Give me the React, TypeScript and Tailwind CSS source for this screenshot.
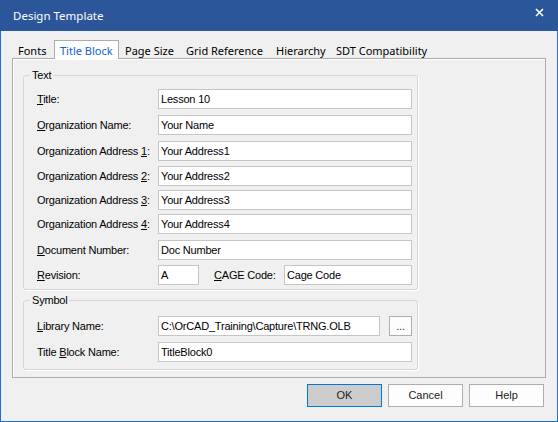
const ui = "font-['Noto_Sans','Open_Sans',sans-serif]";

function Mnemonic({ text, u }: { text: string; u?: number }) {
  if (u === undefined) return <>{text}</>;
  return (
    <>
      {text.slice(0, u)}
      <span className="underline underline-offset-[1px]">{text[u]}</span>
      {text.slice(u + 1)}
    </>
  );
}

function TextBox({ value, className = "" }: { value: string; className?: string }) {
  return (
    <div
      className={`h-[20px] border border-[#c5c5c5] bg-white pl-[2px] flex items-center text-black whitespace-nowrap overflow-hidden ${className}`}
    >
      {value}
    </div>
  );
}

function Row({ label, u, value, className = "" }: { label: string; u?: number; value: string; className?: string }) {
  return (
    <div className={`flex items-center ${className}`}>
      <div className="w-[121px] shrink-0">
        <Mnemonic text={label} u={u} />
      </div>
      <TextBox value={value} className="flex-1" />
    </div>
  );
}

function Group({ title, children, className = "" }: { title: string; children: React.ReactNode; className?: string }) {
  return (
    <fieldset className={`border border-[#d6d6d6] rounded-[3px] shadow-[1px_1px_0_#ffffff] w-[395px] ${className}`}>
      <legend className="ml-[6px] px-[2px] leading-[14px]">{title}</legend>
      {children}
    </fieldset>
  );
}

const textRows = [
  { label: "Title:", u: 0, value: "Lesson 10", mt: "" },
  { label: "Organization Name:", u: 0, value: "Your Name", mt: "mt-[6px]" },
  { label: "Organization Address 1:", u: 21, value: "Your Address1", mt: "mt-[6px]" },
  { label: "Organization Address 2:", u: 21, value: "Your Address2", mt: "mt-[5px]" },
  { label: "Organization Address 3:", u: 21, value: "Your Address3", mt: "mt-[4px]" },
  { label: "Organization Address 4:", u: 21, value: "Your Address4", mt: "mt-[4px]" },
  { label: "Document Number:", u: 0, value: "Doc Number", mt: "mt-[6px]" },
];

const tabs = [
  { name: "Fonts", w: "w-[42px]" },
  { name: "Title Block", w: "w-[65px]", active: true },
  { name: "Page Size", w: "w-[61px]" },
  { name: "Grid Reference", w: "w-[90px]" },
  { name: "Hierarchy", w: "w-[60px]" },
  { name: "SDT Compatibility", w: "w-[110px]" },
];

export default function App() {
  return (
    <div className="w-[558px] h-[422px] flex flex-col bg-[#f0f0f0] font-['Liberation_Sans',Arial,sans-serif] text-[11px] tracking-[-0.2px] text-black">
      {/* title bar */}
      <div className={`h-[31px] shrink-0 bg-[#2b579a] flex items-center justify-between pl-[13px] pr-[14px] text-white text-[11.5px] tracking-normal ${ui}`}>
        <span>Design Template</span>
        <svg width="9" height="9" viewBox="0 0 9 9" className="mb-[7px]">
          <path d="M1 1L8 8M8 1L1 8" stroke="white" strokeWidth="1.6" />
        </svg>
      </div>

      <div className="flex-1 flex flex-col border-x border-b border-[#1f6fd1] pl-[11px] pr-[11px] pt-[9px]">
        {/* tabs */}
        <div className={`h-[18px] flex text-[11px] tracking-normal whitespace-nowrap ${ui}`}>
          {tabs.map((t) =>
            t.active ? (
              <div
                key={t.name}
                className={`${t.w} shrink-0 h-[19px] relative z-10 border border-b-0 border-[#acacac] bg-white text-[#1360d2] pl-[5px] leading-[19px]`}
              >
                {t.name}
              </div>
            ) : (
              <div key={t.name} className={`${t.w} shrink-0 pl-[6px] leading-[21px]`}>
                {t.name}
              </div>
            )
          )}
        </div>

        {/* panel */}
        <div className="h-[320px] shrink-0 border border-[#acacac] shadow-[inset_1px_1px_0_#ffffff] pl-[10px] pt-[9px] flex flex-col">
          <Group title="Text">
            <div className="pl-[13px] pr-[5px] pt-[7px] pb-[4px] flex flex-col">
              {textRows.map((r) => (
                <Row key={r.label} label={r.label} u={r.u} value={r.value} className={r.mt} />
              ))}
              <div className="flex items-center mt-[5px]">
                <div className="w-[121px] shrink-0">
                  <Mnemonic text="Revision:" u={0} />
                </div>
                <TextBox value="A" className="w-[41px]" />
                <div className="w-[70px] ml-[15px] shrink-0">
                  <Mnemonic text="CAGE Code:" u={0} />
                </div>
                <TextBox value="Cage Code" className="flex-1" />
              </div>
            </div>
          </Group>

          <Group title="Symbol" className="mt-[3px]">
            <div className="pl-[13px] pr-[5px] pt-[9px] pb-[7px] flex flex-col">
              <div className="flex items-center">
                <div className="w-[121px] shrink-0">
                  <Mnemonic text="Library Name:" u={0} />
                </div>
                <TextBox value="C:\OrCAD_Training\Capture\TRNG.OLB" className="w-[222px]" />
                <div className="ml-[9px] w-[23px] h-[20px] border border-[#adadad] bg-[#fdfdfd] flex items-center justify-center text-[#333]">
                  ...
                </div>
              </div>
              <Row label="Title Block Name:" u={6} value="TitleBlock0" className="mt-[6px]" />
            </div>
          </Group>
        </div>

        {/* buttons */}
        <div className="mt-[6px] h-[23px] flex justify-end gap-[6px] pr-[2px]">
          <div className="w-[75px] h-[23px] border border-[#0078d7] bg-[#cccccc] flex items-center justify-center text-[#222] tracking-normal">
            OK
          </div>
          <div className="w-[75px] h-[23px] border border-[#adadad] bg-[#fdfdfd] flex items-center justify-center text-[#222] tracking-normal">
            Cancel
          </div>
          <div className="w-[75px] h-[23px] border border-[#adadad] bg-[#fdfdfd] flex items-center justify-center text-[#222] tracking-normal">
            Help
          </div>
        </div>
      </div>
    </div>
  );
}
